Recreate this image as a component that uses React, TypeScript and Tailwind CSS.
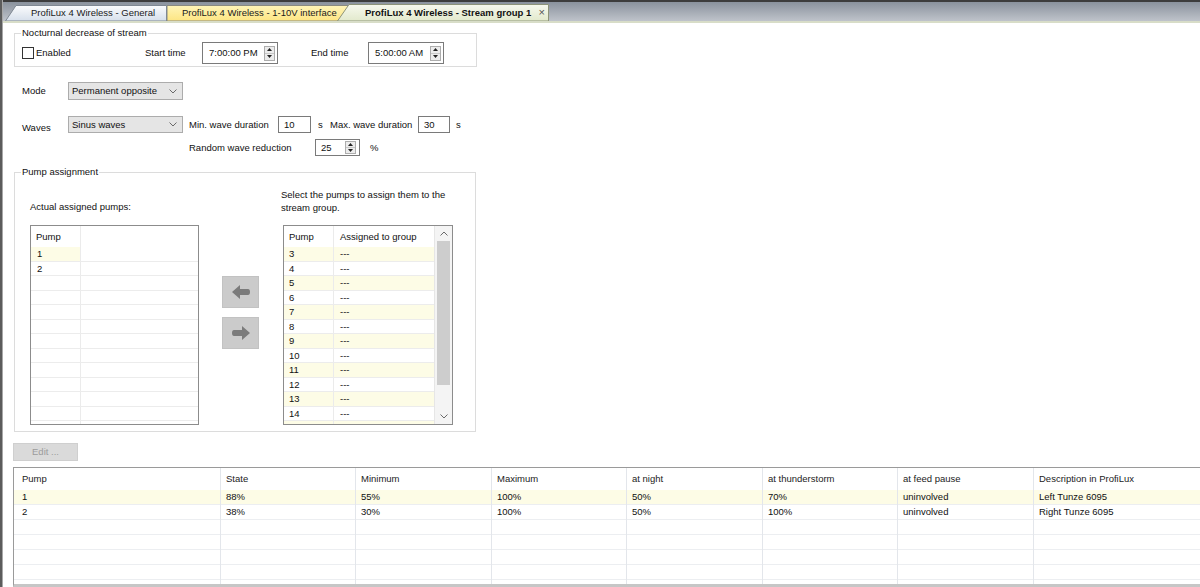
import React from "react";

function Chevron({ dir = "down" }: { dir?: "down" | "up" }) {
  return (
    <svg width="8" height="5" viewBox="0 0 8 5" className="shrink-0">
      {dir === "down" ? (
        <polyline points="0.5,0.5 4,4 7.5,0.5" fill="none" stroke="#6a6a6a" strokeWidth="1" />
      ) : (
        <polyline points="0.5,4.5 4,1 7.5,4.5" fill="none" stroke="#6a6a6a" strokeWidth="1" />
      )}
    </svg>
  );
}

function SpinBtns() {
  return (
    <div className="w-[11px] h-[15px] flex flex-col border border-[#adadad] bg-[#ececec] shrink-0">
      <div className="flex-1 flex items-center justify-center border-b border-[#c8c8c8]">
        <svg width="5" height="3" viewBox="0 0 5 3">
          <polygon points="0,3 2.5,0 5,3" fill="#222" />
        </svg>
      </div>
      <div className="flex-1 flex items-center justify-center">
        <svg width="5" height="3" viewBox="0 0 5 3">
          <polygon points="0,0 2.5,3 5,0" fill="#222" />
        </svg>
      </div>
    </div>
  );
}

function TimeBox({ value }: { value: string }) {
  return (
    <div className="w-[76px] h-[22px] border border-[#7a7a7a] bg-white flex items-center pl-[6px] pr-[2px]">
      <span className="flex-1">{value}</span>
      <SpinBtns />
    </div>
  );
}

function Select({ value, h }: { value: string; h: string }) {
  return (
    <div className={`w-[115px] ${h} border border-[#acacac] bg-[#e5e5e5] flex items-center pl-[3px] pr-[5px]`}>
      <span className="flex-1">{value}</span>
      <Chevron />
    </div>
  );
}

function ArrowBtn({ left }: { left: boolean }) {
  return (
    <div className="w-[37px] h-[32px] bg-[#cbcbcb] border border-[#c2c2c2] flex items-center justify-center">
      <svg width="22" height="16" viewBox="0 0 22 16">
        {left ? (
          <path d="M2,8 L10,1 L10,5 L18,5 Q20,5 20,8 Q20,11 18,11 L10,11 L10,15 Z" fill="#7b7b7b" />
        ) : (
          <path d="M20,8 L12,1 L12,5 L4,5 Q2,5 2,8 Q2,11 4,11 L12,11 L12,15 Z" fill="#7b7b7b" />
        )}
      </svg>
    </div>
  );
}

const leftRows = ["1", "2", "", "", "", "", "", "", "", "", "", "", ""];
const rightRows = ["3", "4", "5", "6", "7", "8", "9", "10", "11", "12", "13", "14", ""];

const bottomCols = [
  { w: "w-[207px]", pl: "pl-[8px]", h: "Pump", r1: "1", r2: "2" },
  { w: "w-[135px]", pl: "pl-[5px]", h: "State", r1: "88%", r2: "38%" },
  { w: "w-[136px]", pl: "pl-[5px]", h: "Minimum", r1: "55%", r2: "30%" },
  { w: "w-[135px]", pl: "pl-[5px]", h: "Maximum", r1: "100%", r2: "100%" },
  { w: "w-[136px]", pl: "pl-[5px]", h: "at night", r1: "50%", r2: "50%" },
  { w: "w-[135px]", pl: "pl-[5px]", h: "at thunderstorm", r1: "70%", r2: "100%" },
  { w: "w-[136px]", pl: "pl-[5px]", h: "at feed pause", r1: "uninvolved", r2: "uninvolved" },
  { w: "w-[200px]", pl: "pl-[5px]", h: "Description in ProfiLux", r1: "Left Tunze 6095", r2: "Right Tunze 6095" },
];

export default function App() {
  return (
    <div className="w-[1200px] h-[587px] overflow-hidden flex bg-white text-[9.5px] leading-[12px] text-[#111] font-['Liberation_Sans',Arial,sans-serif]">
      {/* left window edge */}
      <div className="w-[3px] shrink-0 flex">
        <div className="w-[2px] bg-[#5c5c5c]" />
        <div className="w-[1px] bg-[#a8a8a8]" />
      </div>

      <div className="flex-1 min-w-0 min-h-0 flex flex-col">
        {/* Tab bar */}
        <div className="h-[23px] shrink-0 flex flex-col border-t-2 border-[#3d3d3d] bg-[linear-gradient(to_bottom,#8a929d,#c4c8cf)]">
          <div className="mt-[3px] h-[16px] flex items-end ml-[2px]">
            <div className="relative w-[162px] h-[16px]">
              <svg className="absolute inset-0" width="162" height="16" viewBox="0 0 162 16">
                <defs>
                  <linearGradient id="g1" x1="0" y1="0" x2="0" y2="1">
                    <stop offset="0" stopColor="#fbfcfd" />
                    <stop offset="1" stopColor="#d6dfeb" />
                  </linearGradient>
                </defs>
                <polygon points="0.5,16 11,0.5 161.5,0.5 161.5,16" fill="url(#g1)" stroke="#7f8893" strokeWidth="1" />
              </svg>
              <span className="relative block pl-[26px] leading-[16px] text-[#1a1a1a]">ProfiLux 4 Wireless - General</span>
            </div>
            <div className="relative w-[184px] h-[16px]">
              <svg className="absolute inset-0" width="184" height="16" viewBox="0 0 184 16">
                <defs>
                  <linearGradient id="g2" x1="0" y1="0" x2="0" y2="1">
                    <stop offset="0" stopColor="#fff5b8" />
                    <stop offset="1" stopColor="#fde582" />
                  </linearGradient>
                </defs>
                <polygon points="0,16 0,0.5 183.5,0.5 183.5,16" fill="url(#g2)" stroke="#8a8a80" strokeWidth="1" />
              </svg>
              <span className="relative block pl-[15px] leading-[16px] text-[#1a1a1a]">ProfiLux 4 Wireless - 1-10V interface</span>
            </div>
            <div className="relative -ml-[14px] w-[212px] h-[17px]">
              <svg className="absolute inset-0" width="212" height="17" viewBox="0 0 212 17">
                <defs>
                  <linearGradient id="g3" x1="0" y1="0" x2="0" y2="1">
                    <stop offset="0" stopColor="#f7f9ee" />
                    <stop offset="1" stopColor="#e2e9cc" />
                  </linearGradient>
                </defs>
                <polygon points="0.5,17 12,0.5 211.5,0.5 211.5,17" fill="url(#g3)" stroke="#8d9479" strokeWidth="1" />
              </svg>
              <span className="relative block pl-[28px] leading-[17px] font-bold text-[#111]">ProfiLux 4 Wireless - Stream group 1</span>
              <span className="absolute right-[4px] top-0 leading-[17px] text-[11px] text-[#555]">×</span>
            </div>
          </div>
          <div className="h-[2px] bg-[#d8ddc8]" />
        </div>

        {/* Content */}
        <div className="flex-1 min-h-0 flex flex-col pl-[11px]">
          {/* Nocturnal group */}
          <fieldset className="mt-[4px] w-[463px] border border-[#dcdcdc] pb-[2px]">
            <legend className="ml-[6px] px-[1px] leading-[12px]">Nocturnal decrease of stream</legend>
            <div className="mt-[3px] flex items-center">
              <div className="w-[130px] pl-[7px] flex items-center">
                <div className="w-[12px] h-[12px] border border-[#333] bg-white" />
                <span className="ml-[2px]">Enabled</span>
              </div>
              <span className="w-[57px]">Start time</span>
              <TimeBox value="7:00:00 PM" />
              <span className="ml-[33px] w-[57px]">End time</span>
              <TimeBox value="5:00:00 AM" />
            </div>
          </fieldset>

          {/* Mode */}
          <div className="mt-[15px] flex items-center h-[18px] shrink-0">
            <span className="ml-[8px] w-[46px]">Mode</span>
            <Select value="Permanent opposite" h="h-[18px]" />
          </div>

          {/* Waves */}
          <div className="mt-[16px] flex items-start h-[17px] shrink-0">
            <span className="ml-[8px] w-[46px] mt-[6px]">Waves</span>
            <Select value="Sinus waves" h="h-[17px]" />
            <span className="ml-[6px] w-[89px] leading-[17px]">Min. wave duration</span>
            <div className="w-[33px] h-[17px] border border-[#7a7a7a] bg-white pl-[5px] leading-[15px]">10</div>
            <span className="w-[19px] pl-[7px] leading-[17px]">s</span>
            <span className="w-[88px] leading-[17px]">Max. wave duration</span>
            <div className="w-[32px] h-[17px] border border-[#7a7a7a] bg-white pl-[5px] leading-[15px]">30</div>
            <span className="ml-[6px] leading-[17px]">s</span>
          </div>

          {/* Random wave */}
          <div className="mt-[6px] flex items-center h-[17px] shrink-0">
            <span className="ml-[175px] w-[126px]">Random wave reduction</span>
            <div className="w-[45px] h-[17px] border border-[#7a7a7a] bg-white flex items-center pl-[5px] pr-[3px]">
              <span className="flex-1">25</span>
              <div className="w-[11px] h-[13px] flex flex-col border border-[#adadad] bg-[#ececec]">
                <div className="flex-1 flex items-center justify-center border-b border-[#c8c8c8]">
                  <svg width="5" height="3" viewBox="0 0 5 3"><polygon points="0,3 2.5,0 5,3" fill="#222" /></svg>
                </div>
                <div className="flex-1 flex items-center justify-center">
                  <svg width="5" height="3" viewBox="0 0 5 3"><polygon points="0,0 2.5,3 5,0" fill="#222" /></svg>
                </div>
              </div>
            </div>
            <span className="ml-[10px]">%</span>
          </div>

          {/* Pump assignment */}
          <fieldset className="mt-[10px] w-[462px] border border-[#dcdcdc] pb-[6px] shrink-0">
            <legend className="ml-[6px] px-[1px] leading-[12px]">Pump assignment</legend>
            <div className="flex items-start pl-[15px]">
              {/* left column */}
              <div className="w-[169px] flex flex-col">
                <span className="mt-[23px] leading-[12px]">Actual assigned pumps:</span>
                <div className="mt-[12px] h-[200px] border border-[#8c8c8c] overflow-hidden flex flex-col bg-white">
                  <div className="h-[21px] shrink-0 flex">
                    <div className="w-[50px] pl-[5px] leading-[21px] border-r border-[#ebebeb]">Pump</div>
                    <div className="flex-1" />
                  </div>
                  {leftRows.map((r, i) => (
                    <div key={i} className="h-[14.5px] shrink-0 flex border-b border-[#ececec]">
                      <div className={`w-[50px] pl-[6px] leading-[14px] border-r border-[#ebebeb] ${i === 0 ? "bg-[#fdfce6]" : ""}`}>{r}</div>
                      <div className="flex-1" />
                    </div>
                  ))}
                </div>
              </div>

              {/* arrow buttons */}
              <div className="ml-[23px] mt-[98px] flex flex-col gap-[9px]">
                <ArrowBtn left />
                <ArrowBtn left={false} />
              </div>

              {/* right column */}
              <div className="ml-[22px] flex flex-col">
                <span className="mt-[10px] leading-[13px]">Select the pumps to assign them to the<br />stream group.</span>
                <div className="mt-[11px] ml-[2px] w-[170px] h-[200px] border border-[#8c8c8c] overflow-hidden flex bg-white">
                  <div className="flex-1 flex flex-col">
                    <div className="h-[21px] shrink-0 flex">
                      <div className="w-[50px] pl-[5px] leading-[21px] border-r border-[#ebebeb]">Pump</div>
                      <div className="flex-1 pl-[6px] leading-[21px]">Assigned to group</div>
                    </div>
                    {rightRows.map((r, i) => (
                      <div key={i} className={`h-[14.5px] shrink-0 flex border-b border-[#ececec] ${i % 2 === 0 ? "bg-[#fdfce6]" : ""}`}>
                        <div className="w-[50px] pl-[5px] leading-[14px] border-r border-[#ebebeb]">{r}</div>
                        <div className="flex-1 pl-[6px] leading-[14px]">{r ? "---" : ""}</div>
                      </div>
                    ))}
                  </div>
                  <div className="w-[18px] shrink-0 flex flex-col bg-[#f4f4f4] border-l border-[#e6e6e6]">
                    <div className="h-[15px] flex items-center justify-center"><Chevron dir="up" /></div>
                    <div className="mx-[2px] h-[144px] bg-[#cdcdcd]" />
                    <div className="flex-1" />
                    <div className="h-[16px] flex items-center justify-center"><Chevron dir="down" /></div>
                  </div>
                </div>
              </div>
            </div>
          </fieldset>

          {/* Edit button */}
          <div className="mt-[11px] -ml-[1px] w-[65px] h-[18px] shrink-0 bg-[#dadada] border border-[#cfcfcf] flex items-center justify-center text-[#9c9c9c]">Edit ...</div>

          {/* bottom table */}
          <div className="mt-[6px] -ml-[1px] flex-1 min-h-0 border-t border-l border-[#9a9a9a] border-b-[3px] border-b-[#c6c6c6] flex overflow-hidden">
            {bottomCols.map((c, ci) => (
              <div key={ci} className={`${c.w} shrink-0 flex flex-col ${ci < bottomCols.length - 1 ? "border-r border-[#e3e6eb]" : ""}`}>
                <div className={`h-[22px] shrink-0 ${c.pl} leading-[22px] text-[#222]`}>{c.h}</div>
                <div className={`h-[15px] shrink-0 ${c.pl} leading-[14px] bg-[#fdfce6] border-b border-[#eceef1]`}>{c.r1}</div>
                <div className={`h-[15px] shrink-0 ${c.pl} leading-[14px] border-b border-[#eceef1]`}>{c.r2}</div>
                {[0, 1, 2, 3, 4].map((k) => (
                  <div key={k} className="h-[15px] shrink-0 border-b border-[#eceef1]" />
                ))}
              </div>
            ))}
          </div>
        </div>
      </div>
    </div>
  );
}
